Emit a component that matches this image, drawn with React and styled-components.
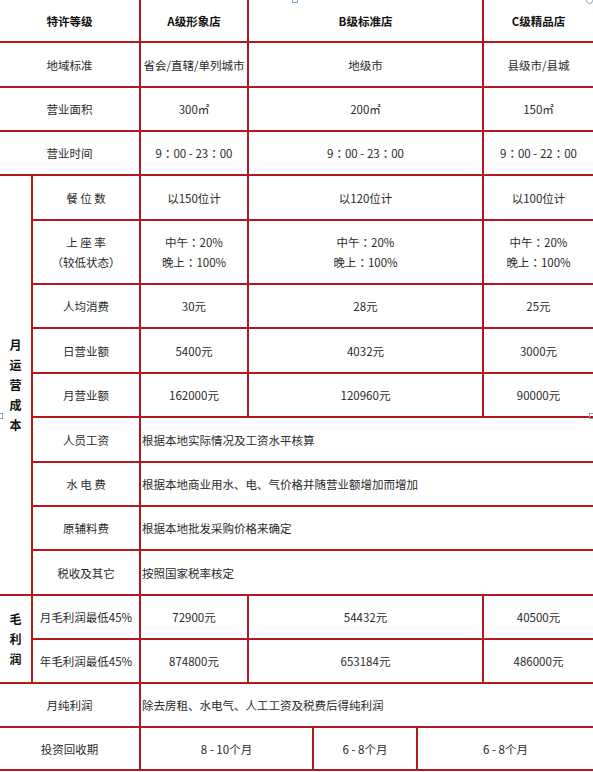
import React from "react";
import styled, { createGlobalStyle } from "styled-components";

const Global = createGlobalStyle`
  html, body { margin: 0; padding: 0; background: #ffffff; }
  body { font-family: "Noto Sans CJK SC", "Noto Sans", "Liberation Sans", sans-serif; }
`;

const LINE = "#b01a1e";
const ROWS = [41, 43, 42, 42, 43, 62, 42, 43, 42, 43, 42, 42, 43, 42, 42, 42, 41];

const Page = styled.div`
  position: relative;
  width: 593px;
  height: 772px;
  background: #ffffff;
`;

const Grid = styled.div`
  display: grid;
  grid-template-columns: 31px 106px 106px 63px 102px 64px 109px;
  grid-template-rows: ${ROWS.map((r) => r + "px").join(" ")};
  gap: 2px;
  background: ${LINE};
  padding-bottom: 2px;
  width: 593px;
`;

const Cell = styled.div`
  grid-column: ${(p) => p.$col};
  grid-row: ${(p) => p.$row};
  background: #ffffff;
  display: flex;
  flex-direction: column;
  align-items: ${(p) => (p.$left ? "flex-start" : "center")};
  justify-content: center;
  padding-left: ${(p) => (p.$left ? "1px" : "0")};
  font-size: 11.5px;
  line-height: 20px;
  font-weight: ${(p) => (p.$bold ? 700 : 400)};
  color: ${(p) => (p.$bold ? "#111111" : "#2a2a2a")};
  white-space: nowrap;
  overflow: hidden;
`;

const Line = styled.span`
  display: block;
`;

const Punct = styled.span`
  font-family: "Noto Sans CJK JP", "Noto Sans CJK SC", sans-serif;
`;

const VChar = styled.span`
  display: block;
  line-height: 20px;
  font-weight: 700;
  font-size: 12px;
  color: #111111;
`;

const Marker = styled.div`
  position: absolute;
  left: ${(p) => p.$x}px;
  top: ${(p) => p.$y}px;
  width: ${(p) => p.$w}px;
  height: ${(p) => p.$h}px;
  border: 1px solid #7aa6c8;
  border-radius: ${(p) => (p.$round ? "50%" : "0")};
  background: transparent;
  box-sizing: border-box;
`;

const Vertical = ({ text, col, row }) => (
  <Cell $col={col} $row={row}>
    {text.split("").map((c, i) => (
      <VChar key={i}>{c}</VChar>
    ))}
  </Cell>
);

/* render fullwidth colon / parentheses with centred glyph forms */
const Txt = ({ t }) => {
  const parts = t.split(/([：（）])/);
  return parts.map((p, i) =>
    /[：（）]/.test(p) ? <Punct key={i}>{p}</Punct> : <React.Fragment key={i}>{p}</React.Fragment>
  );
};

const Lines = ({ v }) =>
  (Array.isArray(v) ? v : [v]).map((t, i) => (
    <Line key={i}>
      <Txt t={t} />
    </Line>
  ));

const threeCol = [
  ["地域标准", "省会/直辖/单列城市", "地级市", "县级市/县城"],
  ["营业面积", "300㎡", "200㎡", "150㎡"],
  ["营业时间", "9：00 - 23：00", "9：00 - 23：00", "9：00 - 22：00"],
];

const opRows = [
  ["餐 位 数", "以150位计", "以120位计", "以100位计"],
  [["上 座 率", "（较低状态）"], ["中午：20%", "晚上：100%"], ["中午：20%", "晚上：100%"], ["中午：20%", "晚上：100%"]],
  ["人均消费", "30元", "28元", "25元"],
  ["日营业额", "5400元", "4032元", "3000元"],
  ["月营业额", "162000元", "120960元", "90000元"],
];

const costRows = [
  ["人员工资", "根据本地实际情况及工资水平核算"],
  ["水 电 费", "根据本地商业用水、电、气价格并随营业额增加而增加"],
  ["原辅料费", "根据本地批发采购价格来确定"],
  ["税收及其它", "按照国家税率核定"],
];

const profitRows = [
  ["月毛利润最低45%", "72900元", "54432元", "40500元"],
  ["年毛利润最低45%", "874800元", "653184元", "486000元"],
];

export default function App() {
  return (
    <Page>
      <Global />
      <Grid>
        <Cell $col="1 / 3" $row="1" $bold>特许等级</Cell>
        <Cell $col="3" $row="1" $bold>A级形象店</Cell>
        <Cell $col="4 / 7" $row="1" $bold>B级标准店</Cell>
        <Cell $col="7" $row="1" $bold>C级精品店</Cell>

        {threeCol.map((r, i) => (
          <React.Fragment key={"t" + i}>
            <Cell $col="1 / 3" $row={i + 2}>{r[0]}</Cell>
            <Cell $col="3" $row={i + 2}><Lines v={r[1]} /></Cell>
            <Cell $col="4 / 7" $row={i + 2}><Lines v={r[2]} /></Cell>
            <Cell $col="7" $row={i + 2}><Lines v={r[3]} /></Cell>
          </React.Fragment>
        ))}

        <Vertical text="月运营成本" col="1" row="5 / 14" />
        {opRows.map((r, i) => (
          <React.Fragment key={"o" + i}>
            <Cell $col="2" $row={i + 5}><Lines v={r[0]} /></Cell>
            <Cell $col="3" $row={i + 5}><Lines v={r[1]} /></Cell>
            <Cell $col="4 / 7" $row={i + 5}><Lines v={r[2]} /></Cell>
            <Cell $col="7" $row={i + 5}><Lines v={r[3]} /></Cell>
          </React.Fragment>
        ))}
        {costRows.map((r, i) => (
          <React.Fragment key={"c" + i}>
            <Cell $col="2" $row={i + 10}>{r[0]}</Cell>
            <Cell $col="3 / 8" $row={i + 10} $left>{r[1]}</Cell>
          </React.Fragment>
        ))}

        <Vertical text="毛利润" col="1" row="14 / 16" />
        {profitRows.map((r, i) => (
          <React.Fragment key={"p" + i}>
            <Cell $col="2" $row={i + 14}>{r[0]}</Cell>
            <Cell $col="3" $row={i + 14}>{r[1]}</Cell>
            <Cell $col="4 / 7" $row={i + 14}>{r[2]}</Cell>
            <Cell $col="7" $row={i + 14}>{r[3]}</Cell>
          </React.Fragment>
        ))}

        <Cell $col="1 / 3" $row="16">月纯利润</Cell>
        <Cell $col="3 / 8" $row="16" $left>除去房租、水电气、人工工资及税费后得纯利润</Cell>

        <Cell $col="1 / 3" $row="17">投资回收期</Cell>
        <Cell $col="3 / 5" $row="17">8 - 10个月</Cell>
        <Cell $col="5" $row="17">6 - 8个月</Cell>
        <Cell $col="6 / 8" $row="17">6 - 8个月</Cell>
      </Grid>
      <Marker $x={292} $y={-3} $w={6} $h={6} />
      <Marker $x={586} $y={-3} $w={7} $h={7} $round />
      <Marker $x={-3} $y={413} $w={6} $h={6} />
      <Marker $x={589} $y={413} $w={6} $h={6} />
    </Page>
  );
}
